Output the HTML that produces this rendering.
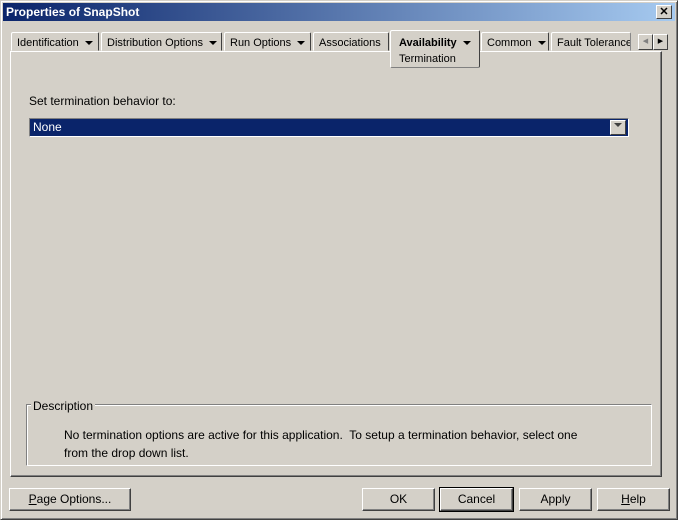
<!DOCTYPE html><html><head><style>
*{margin:0;padding:0;box-sizing:border-box}
body{width:678px;height:520px;background:#d4d0c8;font-family:"Liberation Sans",sans-serif;font-size:11px;position:relative;overflow:hidden;color:#000}
.a{position:absolute}
.win{left:0;top:0;width:678px;height:520px;border:1px solid;border-color:#d4d0c8 #404040 #404040 #d4d0c8;box-shadow:inset 1px 1px #fff,inset -1px -1px #808080}
.title{left:3px;top:3px;width:672px;height:18px;background:linear-gradient(90deg,#0a246a,#a6caf0);color:#fff;font-weight:bold;font-size:12px;line-height:18px;padding-left:3px}
.x{left:656px;top:5px;width:16px;height:14px;background:#d4d0c8;border:1px solid;border-color:#fff #404040 #404040 #fff;font-size:11px;line-height:12px;text-align:center;font-weight:bold;color:#000}
.tab{top:32px;height:19px;border:1px solid;border-color:#fff #404040 transparent #fff;border-radius:2px 2px 0 0;line-height:17px;padding:2px 0 0 5px;white-space:nowrap;overflow:hidden}
.tri{display:inline-block;width:0;height:0;border-left:4px solid transparent;border-right:4px solid transparent;border-top:4px solid #000;margin-left:6px;vertical-align:1px}
.panel{left:10px;top:51px;width:652px;height:426px;border:1px solid;border-color:#fff #404040 #404040 #fff;box-shadow:inset -1px -1px #808080}
.btn{top:488px;height:23px;border:1px solid;border-color:#fff #404040 #404040 #fff;box-shadow:inset -1px -1px #808080;text-align:center;line-height:21px;font-size:12px}
</style></head><body>
<div class="a win"></div>
<div class="a title">Properties of SnapShot</div>
<div class="a x">✕</div>
<div class="a panel"></div>
<div class="a tab" style="left:11px;width:88px">Identification<span class="tri"></span></div>
<div class="a tab" style="left:101px;width:121px">Distribution Options<span class="tri"></span></div>
<div class="a tab" style="left:224px;width:87px">Run Options<span class="tri"></span></div>
<div class="a tab" style="left:313px;width:76px">Associations</div>
<div class="a tab" style="left:481px;width:68px">Common<span class="tri"></span></div>
<div class="a tab" style="left:551px;width:80px;border-right-color:#888">Fault Tolerance</div>
<div class="a" style="left:390px;top:30px;width:90px;height:38px;background:#d4d0c8;border:1px solid;border-color:#fff #404040 #808080 #fff;border-radius:2px;padding:4px 0 0 8px;line-height:16px"><b>Availability</b><span class="tri"></span><br>Termination</div>
<div class="a" style="left:638px;top:34px;width:15px;height:16px;border:1px solid;border-color:#fff #404040 #404040 #fff;color:#808080;font-size:7px;text-align:center;line-height:14px">◀</div>
<div class="a" style="left:653px;top:34px;width:15px;height:16px;border:1px solid;border-color:#fff #404040 #404040 #fff;font-size:7px;text-align:center;line-height:14px">▶</div>
<div class="a" style="left:29px;top:94px;font-size:12px">Set termination behavior to:</div>
<div class="a" style="left:29px;top:118px;width:600px;height:19px;border:1px solid;border-color:#808080 #fff #fff #808080;background:#0a246a;color:#fff;font-size:12px;line-height:17px;padding-left:3px">None</div>
<div class="a" style="left:610px;top:120px;width:16px;height:15px;background:#d4d0c8;border:1px solid;border-color:#fff #404040 #404040 #fff;text-align:center;line-height:9px"><span class="tri" style="margin:0;border-top-color:#404040"></span></div>
<div class="a" style="left:26px;top:404px;width:626px;height:62px;border:1px solid;border-color:#808080 #fff #fff #808080;box-shadow:inset 1px 1px #fff"></div>
<div class="a" style="left:31px;top:399px;background:#d4d0c8;padding:0 2px;font-size:12px">Description</div>
<div class="a" style="left:64px;top:426px;font-size:12px;line-height:18px">No termination options are active for this application.&nbsp; To setup a termination behavior, select one<br>from the drop down list.</div>
<div class="a btn" style="left:9px;width:122px"><u>P</u>age Options...</div>
<div class="a btn" style="left:362px;width:73px">OK</div>
<div class="a btn" style="left:440px;width:73px;outline:1px solid #000">Cancel</div>
<div class="a btn" style="left:519px;width:73px">Apply</div>
<div class="a btn" style="left:597px;width:73px"><u>H</u>elp</div>
</body></html>
